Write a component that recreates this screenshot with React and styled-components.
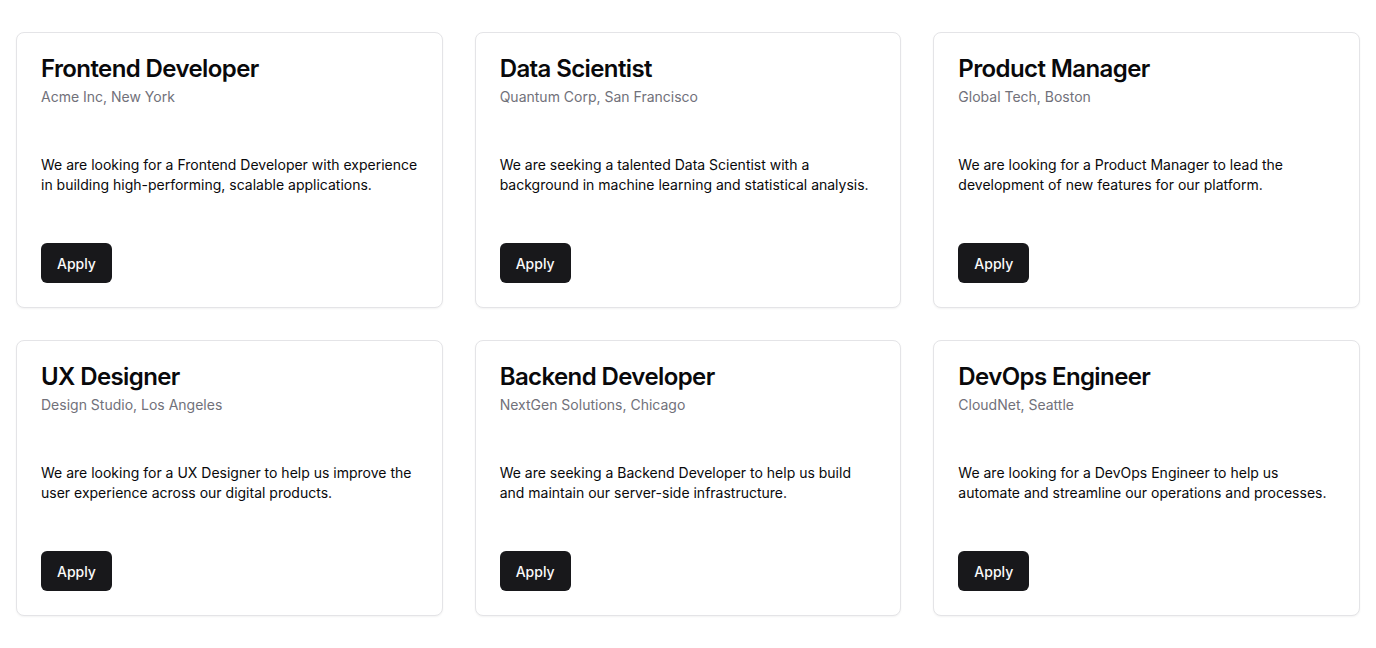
import React from "react";
import styled, { createGlobalStyle } from "styled-components";

const GlobalStyle = createGlobalStyle`
  * { box-sizing: border-box; }
  body {
    margin: 0;
    background: #ffffff;
    font-family: Inter, "Noto Sans", sans-serif;
    color: #09090b;
    -webkit-font-smoothing: antialiased;
  }
`;

const Grid = styled.div`
  display: grid;
  grid-template-columns: repeat(3, 1fr);
  gap: 32px;
  padding: 32px 16px;
`;

const Card = styled.div`
  display: flex;
  flex-direction: column;
  background: #ffffff;
  border: 1px solid #e4e4e7;
  border-radius: 8px;
  box-shadow: 0 1px 2px 0 rgba(0, 0, 0, 0.05);
`;

const Header = styled.div`
  display: flex;
  flex-direction: column;
  gap: 6px;
  padding: 24px 24px 0;
`;

const Title = styled.h3`
  margin: 0;
  font-size: 24px;
  line-height: 24px;
  font-weight: 600;
  letter-spacing: -0.025em;
  color: #09090b;
`;

const Subtitle = styled.p`
  margin: 0;
  font-size: 14px;
  line-height: 20px;
  color: #71717a;
`;

const Body = styled.div`
  padding: 48px 24px 24px;
  font-size: 14px;
  line-height: 20px;
  color: #09090b;

  p {
    margin: 0;
  }
`;

const Footer = styled.div`
  display: flex;
  align-items: center;
  padding: 24px;
`;

const Button = styled.button`
  height: 40px;
  padding: 0 16px;
  border: none;
  border-radius: 6px;
  background: #18181b;
  color: #fafafa;
  font-family: inherit;
  font-size: 14px;
  font-weight: 500;
  cursor: pointer;
`;

const jobs = [
  {
    title: "Frontend Developer",
    place: "Acme Inc, New York",
    text: "We are looking for a Frontend Developer with experience in building high-performing, scalable applications.",
  },
  {
    title: "Data Scientist",
    place: "Quantum Corp, San Francisco",
    text: "We are seeking a talented Data Scientist with a background in machine learning and statistical analysis.",
  },
  {
    title: "Product Manager",
    place: "Global Tech, Boston",
    text: "We are looking for a Product Manager to lead the development of new features for our platform.",
  },
  {
    title: "UX Designer",
    place: "Design Studio, Los Angeles",
    text: "We are looking for a UX Designer to help us improve the user experience across our digital products.",
  },
  {
    title: "Backend Developer",
    place: "NextGen Solutions, Chicago",
    text: "We are seeking a Backend Developer to help us build and maintain our server-side infrastructure.",
  },
  {
    title: "DevOps Engineer",
    place: "CloudNet, Seattle",
    text: "We are looking for a DevOps Engineer to help us automate and streamline our operations and processes.",
  },
];

const JobCard = ({ title, place, text }) => (
  <Card>
    <Header>
      <Title>{title}</Title>
      <Subtitle>{place}</Subtitle>
    </Header>
    <Body>
      <p>{text}</p>
    </Body>
    <Footer>
      <Button>Apply</Button>
    </Footer>
  </Card>
);

export default function App() {
  return (
    <>
      <GlobalStyle />
      <Grid>
        {jobs.map((job) => (
          <JobCard key={job.title} {...job} />
        ))}
      </Grid>
    </>
  );
}
